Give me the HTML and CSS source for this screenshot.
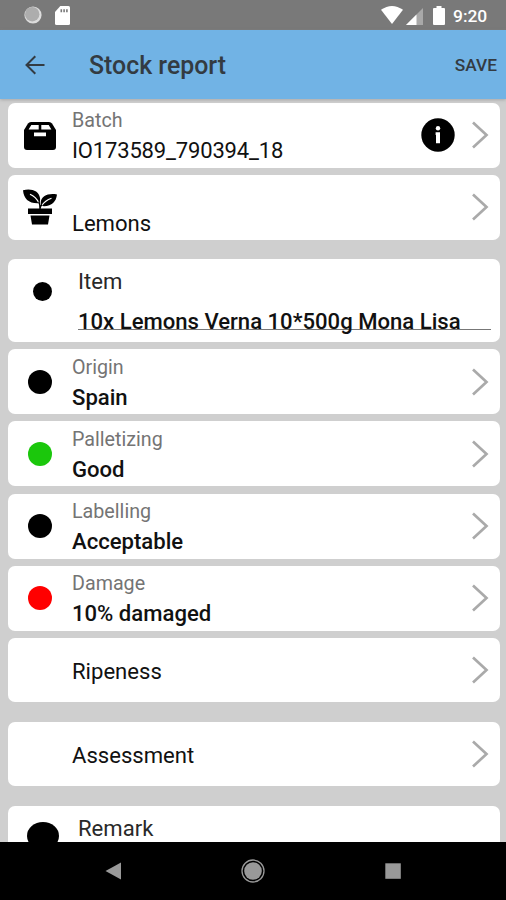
FILE: index.html
```html
<!DOCTYPE html>
<html lang="en">
<head>
<meta charset="utf-8">
<title>Stock report</title>
<link rel="stylesheet" href="styles.css">
</head>
<body>
<svg class="defs" aria-hidden="true"><symbol id="chevron" viewBox="0 0 18 30"><path d="M2 2.5 15.5 15 2 27.5" fill="none" stroke="#aaa" stroke-width="2.7"/></symbol></svg>
<div class="screen">
  <div class="status">
    <svg class="sync" viewBox="0 0 18 18"><circle cx="9" cy="9" r="8.6" fill="#ddd"/><circle cx="8.2" cy="8.2" r="7.2" fill="#adadad"/></svg>
    <svg class="sd" viewBox="0 0 15 19"><path d="M5.3 0H13.5Q15 0 15 1.5V17.5Q15 19 13.5 19H1.5Q0 19 0 17.5V6Z" fill="#fff"/><path d="M5.5 3.2h1.6v3H5.5zM8.3 3.2h1.6v3H8.3zM11.1 3.2h1.6v3h-1.6z" fill="#797979"/></svg>
    <span class="grow"></span>
    <svg class="wifi" viewBox="0 0 22 18"><path d="M0 3.8Q11-3.8 22 3.8L11 18Z" fill="#fff"/></svg>
    <svg class="signal" viewBox="0 0 17 17"><path d="M0 17 17 0V17Z" fill="#a9a9a9"/><path d="M0 17 10.5 6.5V17Z" fill="#fff"/></svg>
    <svg class="battery" viewBox="0 0 12 19"><path d="M3.5 0h5v2H11q1 0 1 1v15q0 1-1 1H1q-1 0-1-1V3q0-1 1-1h2.5z" fill="#fff"/></svg>
    <span class="time">9:20</span>
  </div>
  <header class="bar">
    <svg class="back" viewBox="0 0 20 20"><path d="M19.5 10H1.8M10.3 1.2 1.5 10l8.8 8.8" fill="none" stroke="#333b42" stroke-width="2"/></svg>
    <h1>Stock report</h1>
    <span class="save">SAVE</span>
  </header>
  <main>
    <div class="card">
      <div class="icon"><svg class="box" viewBox="0 0 34 30"><path d="M8 1H26Q28 1 29 2.6L33 9V26Q33 29 30 29H4Q1 29 1 26V9L5 2.6Q6 1 8 1Z"/><path d="M8.3 4H15.7V8.5H5.6ZM18.3 4H25.7L28.4 8.5H18.3ZM11 11.5H23V15.3H11Z" fill="#fff"/></svg></div>
      <div class="text"><span class="label">Batch</span><span class="value plain code">IO173589_790394_18</span></div>
      <svg class="info" viewBox="0 0 34 34"><circle cx="17" cy="17" r="16.7"/><circle cx="17" cy="10.2" r="2.2" fill="#fff"/><path d="M14.6 14.2H19V25.2H15V17H14.6Z" fill="#fff"/></svg>
      <svg class="chev"><use href="#chevron"/></svg>
    </div>
    <div class="card">
      <div class="icon"><svg class="plant" viewBox="0 0 34 36"><path d="M0 1.2C8-.8 16 1.5 17 9Q17.4 12 16.2 14.2C6 14.8.8 10 0 1.2ZM34 5.5C25 4 18 7 17.7 14Q17.6 15.8 18.5 17C28 18 33 13.5 34 5.5Z"/><path d="M7 5.2Q13 8 15.7 13.5M28.5 9.2Q22 11.5 18.8 16.5" fill="none" stroke="#fff" stroke-width="1.2"/><path d="M15.8 12.5Q17 15 17 20M19 15.5Q17.2 17 17 20" fill="none" stroke="#000" stroke-width="1.4"/><path d="M5 19.5H29V25H5ZM7.5 26.5H26.5L25 35.5H9Z"/></svg></div>
      <div class="text"><span class="label"></span><span class="value plain">Lemons</span></div>
      <svg class="chev"><use href="#chevron"/></svg>
    </div>
    <div class="card item">
      <div class="icon"><i class="dot small"></i></div>
      <div class="field"><span class="caption">Item</span><span class="entry">10x Lemons Verna 10*500g Mona Lisa</span></div>
    </div>
    <div class="card">
      <div class="icon"><i class="dot"></i></div>
      <div class="text"><span class="label">Origin</span><span class="value">Spain</span></div>
      <svg class="chev"><use href="#chevron"/></svg>
    </div>
    <div class="card">
      <div class="icon"><i class="dot green"></i></div>
      <div class="text"><span class="label">Palletizing</span><span class="value">Good</span></div>
      <svg class="chev"><use href="#chevron"/></svg>
    </div>
    <div class="card">
      <div class="icon"><i class="dot"></i></div>
      <div class="text"><span class="label">Labelling</span><span class="value">Acceptable</span></div>
      <svg class="chev"><use href="#chevron"/></svg>
    </div>
    <div class="card">
      <div class="icon"><i class="dot red"></i></div>
      <div class="text"><span class="label">Damage</span><span class="value">10% damaged</span></div>
      <svg class="chev"><use href="#chevron"/></svg>
    </div>
    <div class="card short">
      <div class="icon"></div>
      <div class="text"><span class="value plain">Ripeness</span></div>
      <svg class="chev"><use href="#chevron"/></svg>
    </div>
    <div class="card short">
      <div class="icon"></div>
      <div class="text"><span class="value plain">Assessment</span></div>
      <svg class="chev"><use href="#chevron"/></svg>
    </div>
    <div class="card remark">
      <div class="icon"><i class="dot large"></i></div>
      <div class="field"><span class="caption">Remark</span></div>
    </div>
  </main>
  <nav>
    <svg viewBox="0 0 24 24"><path d="M4.5 12 20 3.5V20.5Z" fill="#999"/></svg>
    <svg viewBox="0 0 24 24"><circle cx="12" cy="12" r="11" fill="none" stroke="#999" stroke-width="1.3"/><circle cx="12" cy="12" r="8.8" fill="#999"/></svg>
    <svg viewBox="0 0 24 24"><path d="M4.3 4.3h15.5v15.5H4.3z" fill="#999"/></svg>
  </nav>
</div>
</body>
</html>
```
FILE: styles.css
```css
* { box-sizing: border-box; }
body { margin: 0; font-family: Roboto, "Liberation Sans", sans-serif; color: #111; }
svg { display: block; flex: none; }
.defs { position: absolute; width: 0; height: 0; }
.screen { width: 506px; height: 900px; display: flex; flex-direction: column; overflow: hidden; background: #cfcfcf; }
.status { height: 30px; flex: none; display: flex; align-items: center; padding: 0 19px 0 24px; background: #797979; }
.sync { width: 18px; height: 18px; }
.sd { width: 15px; height: 19px; margin-left: 13px; }
.grow { flex: 1; }
.wifi { width: 22px; height: 18px; margin-right: 3px; }
.signal { width: 17px; height: 17px; margin: 2px 10px 0 0; }
.battery { width: 12px; height: 19px; margin-right: 8px; }
.time { width: 34px; font-size: 17.4px; font-weight: 500; line-height: 30px; color: #fff; white-space: nowrap; padding-top: 1px; }
.bar { height: 69px; flex: none; display: flex; align-items: center; padding: 0 9px 0 25px; background: #71b3e5; color: #333b42; box-shadow: 0 1px 3px #8888; z-index: 1; }
.back { width: 20px; height: 20px; }
h1 { margin: 2px 0 0 44px; flex: 1; font-size: 24.9px; font-weight: 500; line-height: 30px; }
.save { font-size: 17.3px; font-weight: 500; }
main { flex: 1; min-height: 0; overflow: hidden; padding: 3.5px 6.5px 0 8px; }
.card { height: 65px; margin-bottom: 7.2px; display: flex; align-items: center; background: #fff; border-radius: 7px; }
.icon { width: 64px; flex: none; display: flex; justify-content: center; }
.text { flex: 1; display: flex; flex-direction: column; }
.label { height: 31px; padding-top: 4px; font-size: 19.7px; line-height: 26px; color: #747474; }
.value { height: 31px; font-size: 22.1px; line-height: 31px; font-weight: 500; }
.plain { font-weight: 400; line-height: 32px; }
.code { font-size: 22px; letter-spacing: -0.16px; }
.chev { width: 18px; height: 30px; margin-right: 11px; }
.info { width: 34px; height: 34px; margin-right: 16px; }
.box { width: 34px; height: 30px; margin-top: 2px; }
.plant { width: 34px; height: 36px; }
.dot { display: block; width: 24px; height: 24px; border-radius: 50%; background: #000; }
.green { background: #1bc70c; }
.red { background: #f00; }
.small { width: 19px; height: 19px; margin-top: 23px; }
.large { width: 32px; height: 28px; margin-top: 16px; }
.item { height: 83px; margin: 19.5px 0 7px; align-items: flex-start; }
.item .icon, .remark .icon { width: 70px; padding-right: 1px; }
.field { flex: 1; margin-right: 9px; display: flex; flex-direction: column; }
.caption { padding-top: 7px; font-size: 22.1px; line-height: 30px; color: #292929; }
.entry { height: 35px; margin-top: -1px; border-bottom: 1.5px solid #777; font-size: 22.1px; font-weight: 500; line-height: 53px; white-space: nowrap; }
.short { height: 64px; margin-bottom: 20px; }
.short .plain { line-height: 34px; }
.remark { align-items: flex-start; height: 83px; }
nav { height: 58px; flex: none; display: flex; align-items: center; justify-content: space-between; padding: 0 101px; background: #000; }
nav svg { width: 24px; height: 24px; }
```
